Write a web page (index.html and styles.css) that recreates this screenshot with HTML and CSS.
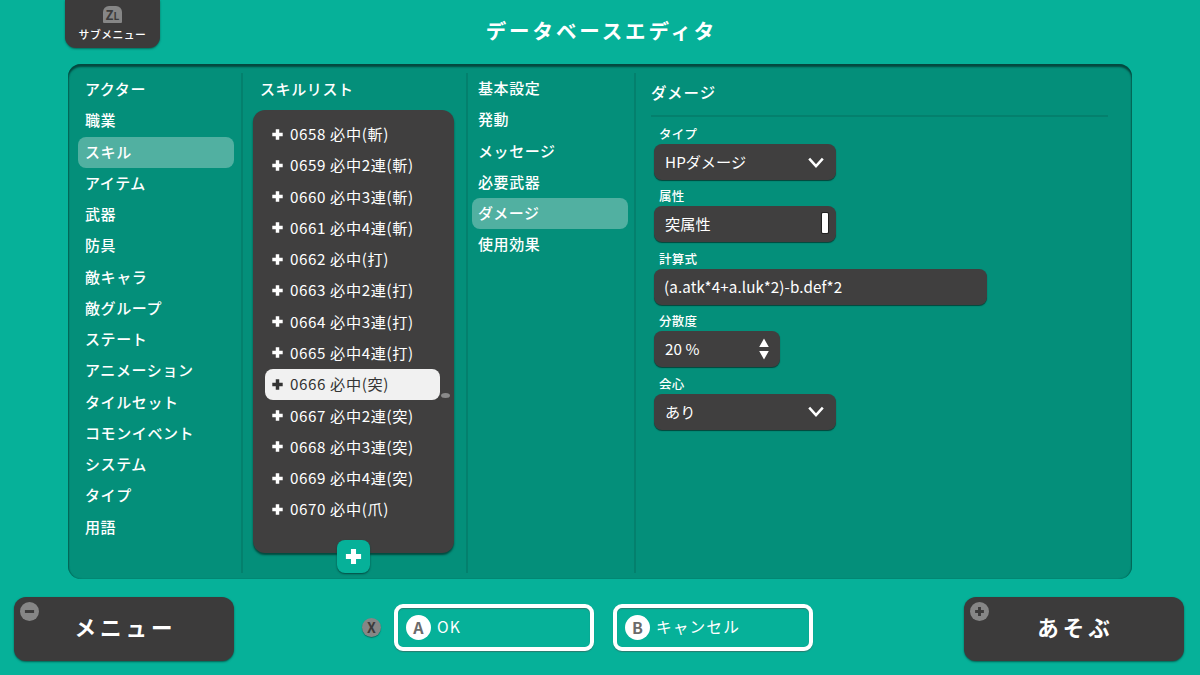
FILE: index.html
```html
<!DOCTYPE html>
<html lang="ja">
<head>
    <meta charset="UTF-8">
    <title>データベースエディタ</title>
    <meta name="viewport" content="width=device-width, initial-scale=1">
    <link rel="stylesheet" href="styles.css">
</head>
<body>
    <svg width="0" height="0" class="defs">
        <symbol id="plus" viewBox="0 0 12 12">
            <path d="M6 1.2v9.6M1.2 6h9.6" fill="none" stroke="currentColor" stroke-width="3.2"/>
        </symbol>
        <symbol id="chevron" viewBox="0 0 16 12">
            <path d="M1.2 1.6L8 9.2l6.8-7.6" fill="none" stroke="currentColor" stroke-width="2.5"/>
        </symbol>
    </svg>

    <header class="header">
        <button class="submenu"><span class="zl">Z<small>L</small></span>サブメニュー</button>
        <h1>データベースエディタ</h1>
    </header>

    <main class="panel">
        <ul class="menu-list categories">
            <li>アクター</li>
            <li>職業</li>
            <li class="active">スキル</li>
            <li>アイテム</li>
            <li>武器</li>
            <li>防具</li>
            <li>敵キャラ</li>
            <li>敵グループ</li>
            <li>ステート</li>
            <li>アニメーション</li>
            <li>タイルセット</li>
            <li>コモンイベント</li>
            <li>システム</li>
            <li>タイプ</li>
            <li>用語</li>
        </ul>

        <section class="skills">
            <h2>スキルリスト</h2>
            <div class="skill-card">
                <ul class="skill-list" id="skillList"></ul>
                <span class="scroll-thumb"></span>
                <button class="add-btn"><svg><use href="#plus"/></svg></button>
            </div>
        </section>

        <ul class="menu-list tabs">
            <li>基本設定</li>
            <li>発動</li>
            <li>メッセージ</li>
            <li>必要武器</li>
            <li class="active">ダメージ</li>
            <li>使用効果</li>
        </ul>

        <section class="detail">
            <h2>ダメージ</h2>
            <div class="field">
                <label>タイプ</label>
                <div class="control">HPダメージ<svg class="chevron"><use href="#chevron"/></svg></div>
            </div>
            <div class="field">
                <label>属性</label>
                <div class="control">突属性<span class="bar"></span></div>
            </div>
            <div class="field">
                <label>計算式</label>
                <div class="control wide">(a.atk*4+a.luk*2)-b.def*2</div>
            </div>
            <div class="field">
                <label>分散度</label>
                <div class="control narrow">20 %<svg class="spin" viewBox="0 0 10 22"><path d="M5 .5l4.8 8.5H.2zM5 21.5l4.8-8.5H.2z" fill="currentColor"/></svg></div>
            </div>
            <div class="field">
                <label>会心</label>
                <div class="control">あり<svg class="chevron"><use href="#chevron"/></svg></div>
            </div>
        </section>
    </main>

    <footer class="footer">
        <button class="big-btn menu-btn">
            <span class="corner"><svg viewBox="0 0 12 12"><path d="M1 6h10" stroke="currentColor" stroke-width="3.2"/></svg></span>
            メニュー
        </button>
        <span class="key-x">X</span>
        <button class="outline-btn"><span class="key">A</span>OK</button>
        <button class="outline-btn cancel"><span class="key">B</span>キャンセル</button>
        <button class="big-btn play-btn">
            <span class="corner"><svg><use href="#plus"/></svg></span>
            あそぶ
        </button>
    </footer>

    <script>
        const skills = [
            '必中(斬)', '必中2連(斬)', '必中3連(斬)', '必中4連(斬)',
            '必中(打)', '必中2連(打)', '必中3連(打)', '必中4連(打)',
            '必中(突)', '必中2連(突)', '必中3連(突)', '必中4連(突)',
            '必中(爪)'
        ];
        const firstId = 658;
        const selectedId = 666;

        const list = document.getElementById('skillList');
        skills.forEach((name, idx) => {
            const id = firstId + idx;
            const row = document.createElement('li');
            if (id === selectedId) row.className = 'active';
            row.innerHTML = `<svg><use href="#plus"/></svg>${String(id).padStart(4, '0')} ${name}`;
            list.appendChild(row);
        });
    </script>
</body>
</html>
```
FILE: styles.css
```css
* { box-sizing: border-box; }
body {
    margin: 0; width: 1200px; height: 675px; overflow: hidden;
    display: flex; flex-direction: column;
    background: #06b199; color: #fff;
    font: 500 15px "Noto Sans CJK JP", "Noto Sans", sans-serif;
    letter-spacing: 0.6px;
}
h1, h2, ul { margin: 0; padding: 0; }
ul { list-style: none; }
button {
    border: none; padding: 0; color: inherit;
    font: inherit; letter-spacing: inherit;
}
svg { display: block; flex: none; }
.defs { position: absolute; }

/* header */
.header {
    height: 64px; display: grid;
    grid-template-columns: 65px 95px 1fr 160px;
    align-items: start;
}
.submenu {
    grid-column: 2; height: 48px;
    display: flex; flex-direction: column; align-items: center;
    padding-top: 6px;
    background: #3c3b3b;
    border-radius: 0 0 11px 11px;
    box-shadow: 0 1px 2px rgba(0,60,50,0.6);
    font-size: 10.8px; line-height: 20px; letter-spacing: 0.5px;
}
.zl {
    width: 19px; height: 17px; margin-bottom: 1px;
    background: #868686; color: #3c3b3b;
    border-radius: 6px 6px 1px 1px;
    font-size: 13px; font-weight: 700; line-height: 17px; letter-spacing: 0;
}
.zl small { font-size: 10px; }
h1 {
    grid-column: 3; text-align: center; padding-left: 3px;
    font-size: 20.5px; font-weight: 700; line-height: 61px; letter-spacing: 2.9px;
}

/* main panel */
.panel {
    width: 1064px; height: 515px; margin: 0 auto;
    display: grid;
    grid-template-columns: 173px 225px 168px 1fr;
    background: #048f7a;
    border-radius: 13px;
    box-shadow: inset 0 3px 2px #04483f, inset 1px 0 1px rgba(0,80,68,0.5), inset -1px 0 1px rgba(0,80,68,0.5);
    padding: 9px 0 6px;
}
.panel > * + * { border-left: 2px solid #04806d; }
.menu-list li {
    height: 31.27px; line-height: 30px;
    padding-left: 7px;
    border-radius: 8px;
}
.menu-list .active { background: #51b0a1; }
.categories { padding: 1px 7px 0 10px; }
.tabs { padding: 0 6px 0 4px; }
.tabs li { padding-left: 6px; }

/* skill list */
.skills { padding: 0 12px 0 10px; }
.skills h2 {
    height: 37px; padding-left: 7px;
    font-size: 15px; font-weight: 500; line-height: 31px;
}
.skill-card {
    position: relative;
    width: 201px; height: 443px;
    padding: 9px 14px 0 12px;
    background: #403f3f;
    border-radius: 12px;
    box-shadow: 0 2px 2px rgba(0,50,42,0.75);
}
.skill-list li {
    height: 31.27px; line-height: 29px;
    display: flex; align-items: center;
    padding: 0 0 2px 6px;
    border-radius: 8px;
    font-size: 15.2px; font-weight: 400;
}
.skill-list svg { width: 13px; height: 13px; margin: 1px 6px 0 0; }
.skill-list .active { background: #f1f1f1; color: #343434; }
.scroll-thumb {
    position: absolute; left: 188px; top: 283px;
    width: 9px; height: 5px;
    border-radius: 50%; background: #8a8a8a;
}
.add-btn {
    position: absolute; left: 84px; bottom: -20px;
    width: 33px; height: 33px;
    display: grid; place-items: center;
    background: #06b199; border-radius: 8px;
    box-shadow: 0 1px 2px #044a40;
}
.add-btn svg { width: 19px; height: 19px; margin-top: -1px; }

/* damage settings */
.detail { padding: 0 24px 0 15px; }
.detail h2 {
    height: 44px; margin-bottom: 5px;
    border-bottom: 2px solid #04806d;
    font-size: 15.5px; font-weight: 500; line-height: 39px; letter-spacing: 1px;
}
.field { height: 62.4px; padding-left: 3px; }
.field label {
    display: block; height: 22px; padding-left: 5px;
    font-size: 12.5px; line-height: 23px; letter-spacing: 0.3px;
}
.control {
    width: 182px; height: 36px;
    display: flex; align-items: center; justify-content: space-between;
    padding: 0 12px 2px 11px;
    background: #403f3f;
    border-radius: 8px;
    box-shadow: 0 1px 1px rgba(0,50,42,0.8);
    font-size: 15.2px; font-weight: 400; line-height: 30px; letter-spacing: 0.1px;
}
.control.wide { width: 333px; padding-left: 10px; }
.control.narrow { width: 126px; padding-right: 11px; }
.chevron { width: 16px; height: 12px; margin-top: 3px; }
.spin { width: 10px; height: 22px; margin-top: 1px; }
.bar {
    width: 6px; height: 20px; margin-right: -4px;
    background: #fff; border-radius: 1px;
    box-shadow: 0 0 0 1px #222;
}

/* footer */
.footer {
    height: 96px; display: flex; align-items: center;
    padding: 0 16px 0 14px;
}
.big-btn {
    position: relative;
    width: 220px; height: 64px; margin-top: 3px;
    padding: 0 0 4px 3px;
    background: #3c3b3b;
    border-radius: 12px;
    box-shadow: 0 1px 2px rgba(0,60,50,0.7);
    font-size: 21.5px; font-weight: 700; line-height: 58px; letter-spacing: 4px;
}
.corner {
    position: absolute; left: 6px; top: 5px;
    width: 19px; height: 19px;
    display: grid; place-items: center;
    background: #868686; color: #3c3b3b;
    border-radius: 50%;
}
.corner svg { width: 11px; height: 11px; }
.key-x {
    width: 19px; height: 19px; margin: 0 13px 0 128px;
    background: #868686; color: #3c3b3b;
    border-radius: 50%;
    box-shadow: 0 1px 1px rgba(0,60,50,0.5);
    font-size: 14px; font-weight: 700; line-height: 18px; letter-spacing: 0;
    text-align: center;
}
.outline-btn {
    width: 200px; height: 47px; margin-right: 19px;
    display: flex; align-items: center;
    padding: 0 0 1px 8px;
    background: none;
    border: 4px solid #fff; border-radius: 9px;
    box-shadow: 0 1px 1px rgba(60,100,92,0.7), inset 0 1px 1px rgba(60,100,92,0.7);
    font-size: 15.7px; font-weight: 400; line-height: 22px; letter-spacing: 1.1px;
}
.cancel { margin-right: 151px; }
.key {
    width: 25px; height: 25px; margin: 1px 6px 0 0;
    background: #fff; color: #6b6b6b;
    border-radius: 50%;
    font-size: 16px; font-weight: 700; line-height: 24px; letter-spacing: 0;
    text-align: center;
}
```
